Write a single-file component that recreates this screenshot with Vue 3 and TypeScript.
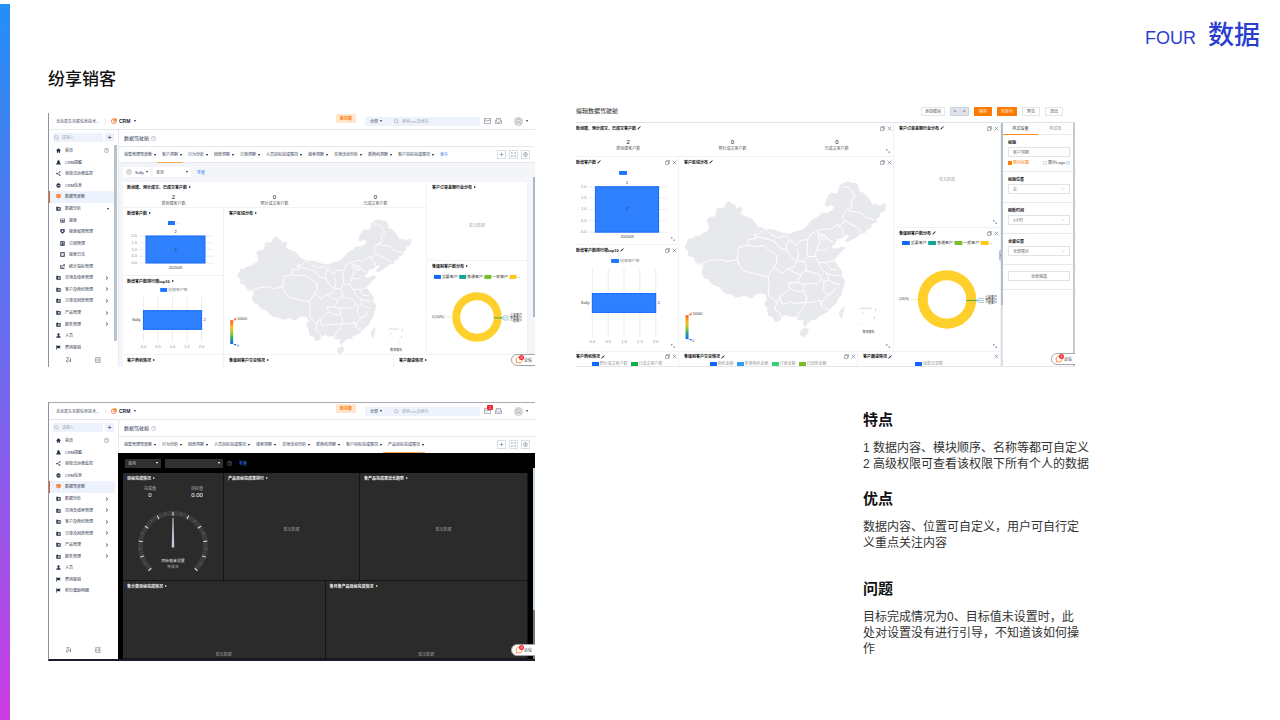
<script setup lang="ts">
interface MenuItem { icon: string; text: string; sub?: boolean; arrow?: 'right' | 'down'; active?: boolean }
interface Shell { id: string; dark: boolean; tabs: string[]; activeTab: string; more: boolean; menu: MenuItem[] }

const icons: Record<string, string> = {
  home: 'M8 1 1 7.500V9h2v6h4v-4h2v4h4V9h2V7.500z',
  bell: 'M8 1a4 4 0 0 0-4 4v3l-3 4v2h14v-2l-3-4V5a4 4 0 0 0-4-4z',
  flow: 'M1 6h4v4H1zM10 1h4v4h-4zM10 11h4v4h-4zM5 7.400l5-4.400v2L6 8l4 3.500v2L5 8.600z',
  pie: 'M8 1a7 7 0 1 0 7 7H10V6h5A7 7 0 0 0 8 1zM5 6h3v4H5z',
  screen: 'M1 1h14v10h-4l-3 4-3-4H1zM4 5v2l3 2 5-4V3.500L7 7z',
  folder: 'M1 2h5l2 2h7v11H1zM6 7v5h2v-2h3v2h2V8H9V7z',
  table: 'M1 2h14v12H1zM3 4v2h10V4zM3 8v4h4V8zM9 8v1.500h4V8zM9 10.500V12h4v-1.500z',
  shield: 'M1 1h14v8l-7 6-7-6zM5 5v3l3 2.500L11 8V5z',
  book: 'M1 1h14v14H1zM4 4v7h3V4zM9 4v3h4V4zM9 11l4 2v-3z',
  log: 'M1 1h14v14H1zM4 4v8h8V4z',
  gauge: 'M1 3h8v2H3v8h9v-3h2v5H1zM11 1h4v6h-4zM5 7h2v5H5zM8 9h2v3H8z',
  person: 'M8 1a3.500 3.500 0 0 0-2 6.500L5 10l-4 2v3h14v-3l-4-2-1-2.500A3.500 3.500 0 0 0 8 1z',
  flag: 'M1 1h2v1h12l-3 4 3 4H3v5H1z',
}

const lead: MenuItem[] = [
  { icon: 'home', text: '首页' },
  { icon: 'bell', text: 'CRM提醒' },
  { icon: 'flow', text: '审批流运维监控' },
  { icon: 'pie', text: 'CRM信息' },
  { icon: 'screen', text: '数据驾驶舱', active: true },
]
const groups: MenuItem[] = ['市场及线索管理', '客户及商机管理', '订单及回款管理', '产品管理', '服务管理']
  .map((text) => ({ icon: 'folder', text, arrow: 'right' as const }))
const tail: MenuItem[] = [
  { icon: 'person', text: '人员' },
  { icon: 'flag', text: '费用报销' },
]

const shells: Shell[] = [
  {
    id: 'light', dark: false, more: true, activeTab: '客户洞察',
    tabs: ['销售管理驾驶舱', '客户洞察', '行为分析', '回款洞察', '订单洞察', '人员目标完成情况', '线索洞察', '市场活动分析', '新商机洞察', '客户目标完成情况'],
    menu: [
      ...lead,
      { icon: 'folder', text: '数据分析', arrow: 'down' },
      { icon: 'table', text: '报表', sub: true },
      { icon: 'shield', text: '报表权限管理', sub: true },
      { icon: 'book', text: '订阅管理', sub: true },
      { icon: 'log', text: '报表日志', sub: true },
      { icon: 'gauge', text: '统计指标管理', sub: true },
      ...groups, ...tail,
    ],
  },
  {
    id: 'dark', dark: true, more: false, activeTab: '产品目标完成情况',
    tabs: ['销售管理驾驶舱', '行为分析', '回款洞察', '人员目标完成情况', '线索洞察', '市场活动分析', '新商机洞察', '客户目标完成情况', '产品目标完成情况'],
    menu: [...lead, { icon: 'folder', text: '数据分析', arrow: 'right' }, ...groups, ...tail, { icon: 'flag', text: '积分激励明细' }],
  },
]

const stats = [
  { value: '2', label: '新创建客户数' },
  { value: '0', label: '预计成交客户数' },
  { value: '0', label: '已成交客户数' },
]

const columns = {
  small: { box: '123 218 100 57', x: 146, w: 59, top: 236, bottom: 263, axis: 137, from: 139, to: 213, legend: 168, legendY: 221, label: 268.5 },
  large: { box: '576 167 102 78', x: 595, w: 64, top: 187, bottom: 233, axis: 586, from: 588, to: 667, legend: 619, legendY: 171, label: 238.5 },
}
const rows = {
  small: { box: '123 286 100 69', x: 143, step: 14.75, top: 297, bottom: 343, barTop: 311, barH: 19, legend: 160, legendY: 288, label: 348.5 },
  large: { box: '576 255 102 97', x: 592, step: 16, top: 269, bottom: 338, barTop: 294, barH: 19, legend: 611, legendY: 259, label: 344 },
}
const donuts = {
  small: { box: '427 271 101 84', cx: 477.5, cy: 317.5, r: 21, w: 8, legend: 434, gap: 25.5, legendY: 275, left: 444, right: 511 },
  large: { box: '894 238 107 114', cx: 947.5, cy: 300, r: 24.5, w: 10, legend: 902, gap: 26.5, legendY: 241, left: 909, right: 986 },
}
const levels = [
  { name: '重要客户', color: '#1268fb' },
  { name: '普通客户', color: '#0fa598' },
  { name: '一般客户', color: '#78bf25' },
  { name: '--', color: '#fcc812' },
]
const maps = {
  small: { box: '224 218 203 137', place: 'translate(-356 62) scale(.867)', gx: 230, gy: 321 },
  large: { box: '679 167 214 185', place: 'translate(0 0)', gx: 685, gy: 316 },
}
const ticks = ['0.0', '0.5', '1.0', '1.5', '2.0']

const outline = 'M688 239 692 239 695 236 699 236 703 233 708 231 708 225 706 220 710 217 714 217 716 213 716 209 720 208 724 208 726 203 729 201 732 204 735 205 736 209 741 207 742 210 740 214 746 217 752 219 755 223 758 227 765 229 774 230 783 233 790 234 797 231 803 230 808 225 812 220 818 217 822 213 828 213 833 210 834 207 831 205 828 207 825 206 826 201 829 195 832 193 837 194 839 190 840 185 844 183 848 181 853 183 857 183 859 187 860 192 864 193 868 197 871 201 873 205 877 204 880 206 884 204 887 204 886 209 885 212 881 213 880 217 877 219 877 223 872 224 872 228 867 230 866 233 861 234 858 237 853 240 847 243 845 241 850 236 847 235 842 239 837 240 836 244 832 247 833 249 838 249 841 247 846 248 843 251 840 254 837 258 834 260 838 266 842 271 843 275 841 276 845 280 845 285 843 290 842 295 839 299 837 304 832 308 829 312 824 315 819 317 817 320 811 321 808 324 805 328 803 325 804 321 798 321 795 317 790 318 787 316 783 317 781 320 778 323 774 322 773 318 769 317 767 313 767 308 764 306 765 302 767 300 765 295 759 294 755 296 752 299 748 298 744 296 740 298 735 298 731 295 726 295 722 292 719 288 714 286 711 285 708 280 704 279 701 274 702 270 703 265 698 265 694 261 693 258 687 256 688 252 684 248 686 243Z'
const borders = [
  'M765 229 759 234 754 235 756 239 748 240 747 246 738 248 737 260 727 262 720 260 709 261 698 265',
  'M748 246 757 247 764 246 770 252 776 255 777 262 774 268 771 272 768 277 760 276 753 274 745 272 740 268 737 260',
  'M754 236 765 239 775 242 779 248 787 251 792 258 797 262 793 268 788 269 782 274 777 270 774 268',
  'M768 277 769 285 768 295 772 299 777 303 780 297 786 293 790 289 788 284 797 283 801 276 793 272 788 269',
  'M765 229 771 235 778 238 786 236 790 240 786 245 787 251M790 240 796 246 800 241 808 240 811 234 818 231 824 229 831 230 837 225 841 226 845 221 843 216 847 210 853 207 851 201 856 197 851 190 848 187 842 187',
  'M797 262 799 254 797 249M808 240 807 249 808 257 804 262 797 262M818 233 820 242 817 250 815 257 808 257M818 233 824 236 829 240 834 243M821 236 825 235 827 239 823 241ZM817 250 824 251 828 248M815 257 819 263 826 263 835 261',
  'M845 221 852 225 857 227 862 232M837 225 843 230 844 236M847 210 854 212 861 213 867 218 875 220M801 276 805 271 812 273 819 275 822 280 817 285 810 284 804 285 797 283',
  'M819 263 822 270 827 274 829 281 824 282 822 280M827 274 834 276 840 276M826 263 831 270 837 270M804 262 807 268 805 271M829 281 835 284 840 285M824 282 824 291 828 296 823 302 821 307M828 296 833 293 836 288',
  'M804 285 804 293 807 298 806 303 813 303 819 301 823 302M790 289 796 292 803 292M780 297 782 305 790 303 797 304 806 303 802 310 798 315 797 320M777 303 775 310 780 314 782 319M819 301 823 308 830 311',
]
const hainan = 'M801 331 805 329 809 330 808 334 805 338 801 337 800 334Z'
const taiwan = 'M843 308 845 307 844 313 842 320 840 317 839 313Z'
const islets = ['M860 309h12M862 314h2M876 309v3M875 317v3M872 325h1M861 325h1']

const gaugeTicks = Array.from({ length: 11 }, (_, i) => -135 + i * 27)
const darkTop = [
  { title: '产品目标完成率排行' },
  { title: '各产品完成率增长趋势' },
]
const selects = [
  { id: 'title-pos', label: '标题位置', value: '左' },
  { id: 'refresh', label: '刷新时间', value: '2小时' },
  { id: 'full', label: '全屏设置', value: '全部展示' },
]
const editorFoot = [
  { title: '客户商机情况', copy: true, legend: [['#1268fb', '预计成交客户数'], ['#0fb04c', '已成交客户数']] },
  { title: '各级别客户交易情况', copy: true, legend: [['#1268fb', '商机金额'], ['#2f9df5', '重单商机金额'], ['#36cf7c', '订单金额'], ['#78bf25', '已回款金额']] },
  { title: '客户跟进情况', copy: false, legend: [['#1268fb', '销售记录数']] },
]
</script>

<template>
  <div class="slide">
    <svg class="defs" aria-hidden="true">
      <defs>
        <linearGradient id="heat" x1="0" y1="0" x2="0" y2="1">
          <stop offset="0" stop-color="#ff5a14" /><stop offset=".3" stop-color="#ffb81c" /><stop offset=".55" stop-color="#9cc63a" />
          <stop offset=".75" stop-color="#22a878" /><stop offset="1" stop-color="#1268fb" />
        </linearGradient>
        <symbol id="i-search" viewBox="0 0 16 16"><circle cx="7" cy="7" r="5.5" fill="none" stroke="currentColor" stroke-width="1.6" /><path d="m11 11 4 4" stroke="currentColor" stroke-width="1.6" /></symbol>
        <symbol id="i-help" viewBox="0 0 16 16"><circle cx="8" cy="8" r="7" fill="none" stroke="currentColor" stroke-width="1.4" /><path d="M5.500 6.500c0-3.500 5-3.500 5-.5 0 2-2.500 2-2.500 3.500M8 11v1.500" fill="none" stroke="currentColor" stroke-width="1.4" /></symbol>
        <symbol id="i-copy" viewBox="0 0 16 16"><path d="M5 4V1.500h9.500v9.500H12M1.500 5H11v9.500H1.500z" fill="none" stroke="currentColor" stroke-width="1.800" /></symbol>
        <symbol id="i-close" viewBox="0 0 16 16"><path d="m2 2 12 12M14 2 2 14" stroke="currentColor" stroke-width="2" /></symbol>
        <symbol id="i-size" viewBox="0 0 16 16"><path d="M1 7V2h5M1 2l4 4M15 9v5h-5M15 14l-4-4" fill="none" stroke="currentColor" stroke-width="2" /></symbol>
        <symbol id="i-pen" viewBox="0 0 16 16"><path d="M1 15 3 10 13 1l2 2-9 9z" fill="currentColor" /></symbol>
        <symbol id="i-down" viewBox="0 0 16 16"><path d="m2 5 6 6 6-6" fill="none" stroke="currentColor" stroke-width="1.600" /></symbol>
      </defs>
    </svg>

    <div class="stripe"></div>
    <header class="head"><span class="four">FOUR</span><span class="topic">数据</span></header>
    <h1 class="brand">纷享销客</h1>

    <main class="board">
      <section v-for="s in shells" :key="s.id" class="shell" :class="{ dark: s.dark }">
        <div class="topbar">
          <span class="org">北京易车互联信息技术...</span>
          <svg class="logo" viewBox="0 0 16 16"><path d="M7 2a6.500 6.500 0 1 0 7 7H7z" fill="#fff" stroke="#f0642d" stroke-width="2" /><path d="M9 0v7h7a7 7 0 0 0-7-7z" fill="#ff7a00" /></svg>
          <b class="crm">CRM</b><i class="caret"></i>
          <span class="fresh">新功能</span>
          <div class="find">
            <span class="scope">全部 <i class="caret"></i></span>
            <svg class="ic5"><use href="#i-search" /></svg>
            <input type="search" placeholder="搜索crm及更多" aria-label="搜索crm及更多">
          </div>
          <span class="mails">
            <svg class="mail" viewBox="0 0 16 14"><path d="M1 1h14v12H1zM1 5h4l1 2h4l1-2h4" fill="none" stroke="#7b8394" stroke-width="1.500" /></svg>
            <em v-if="s.dark" class="count">1</em>
          </span>
          <svg class="mail" viewBox="0 0 16 14"><path d="M3 7V1h10v6M1 6v7h14V6l-5 4H6zM6 4h4" fill="none" stroke="#7b8394" stroke-width="1.500" /></svg>
          <svg class="face" viewBox="0 0 16 16"><circle cx="8" cy="8" r="7.500" fill="#dcdcdc" stroke="#c4c4c4" /><circle cx="8" cy="6.500" r="3" fill="#eee" stroke="#999" /><path d="M3.500 13c1-4 8-4 9 0" fill="#eee" stroke="#999" /></svg>
          <i class="caret"></i>
        </div>

        <aside class="side">
          <div class="seek">
            <label class="box"><svg class="ic5"><use href="#i-search" /></svg><input type="text" placeholder="请输入" aria-label="请输入"></label>
            <button type="button" aria-label="添加">+</button>
          </div>
          <nav class="menu">
            <a v-for="m in s.menu" :key="m.text" href="#" class="item" :class="{ sub: m.sub, active: m.active }">
              <svg viewBox="0 0 16 16" fill-rule="evenodd"><path :d="icons[m.icon]" /></svg>
              <span>{{ m.text }}</span>
              <svg v-if="m.icon === 'home'" class="q"><use href="#i-help" /></svg>
              <svg v-if="m.arrow === 'right'" class="chev" viewBox="0 0 16 16"><path d="m4 2 7 6-7 6" /></svg>
              <i v-if="m.arrow === 'down'" class="caret"></i>
            </a>
          </nav>
          <div class="sidefoot">
            <svg viewBox="0 0 16 16"><path d="M1 2h8M3 4l9 9M12 4v9M2 8v5h4" fill="none" stroke="#4a5568" stroke-width="1.800" /></svg>
            <svg viewBox="0 0 16 16"><path d="M1 2h14M8 6h7M8 10h7M1 14h14M1 5l4 3-4 3z" fill="none" stroke="#4a5568" stroke-width="1.500" /></svg>
          </div>
          <i v-if="!s.dark" class="bar"></i>
        </aside>

        <div class="work">
          <div class="title">数据驾驶舱<svg class="ic5"><use href="#i-help" /></svg></div>
          <div class="tabs">
            <a v-for="t in s.tabs" :key="t" href="#" class="tab" :class="{ on: t === s.activeTab }">{{ t }}<i class="caret"></i></a>
            <a v-if="s.more" href="#" class="tab more">更多</a>
            <span class="tools">
              <button type="button" aria-label="添加"><svg viewBox="0 0 16 16"><path d="M8 2v12M2 8h12" /></svg></button>
              <button type="button" aria-label="全屏"><svg viewBox="0 0 16 16"><path d="M1 5V1h4M11 1h4v4M15 11v4h-4M5 15H1v-4M4 4l2 2M12 4l-2 2M4 12l2-2M12 12l-2-2" /></svg></button>
              <button type="button" aria-label="设置"><svg viewBox="0 0 16 16"><path d="M5 2h6l4 6-4 6H5L1 8z" /><circle cx="8" cy="8" r="2" /></svg></button>
            </span>
          </div>

          <div v-if="!s.dark" class="canvas">
            <div class="filters">
              <button type="button" class="user"><svg class="face" viewBox="0 0 16 16"><circle cx="8" cy="8" r="7" fill="#e6e6e6" stroke="#aaa" /><circle cx="8" cy="6" r="2.500" fill="#fff" stroke="#999" /></svg>Sally<i class="caret"></i></button>
              <label class="pick"><select aria-label="时间"><option>本月</option></select><i class="caret"></i></label>
              <a href="#" class="reset">重置</a>
            </div>
            <div class="panels">
              <div class="leftpart">
                <article class="panel">
                  <h3>新创建、预计成交、已成交客户数<i class="tri"></i></h3>
                  <div class="stats"><p v-for="k in stats" :key="k.label"><b>{{ k.value }}</b>{{ k.label }}</p></div>
                </article>
                <div class="inner">
                  <div class="pair">
                    <article v-for="c in [columns.small]" :key="c.box" class="panel">
                      <h3>新增客户数<i class="tri"></i></h3>
                      <svg class="chart" :viewBox="c.box">
                        <rect :x="c.legend" :y="c.legendY" width="7" height="4" class="blue" /><text :x="c.legend + 9" :y="c.legendY + 3" class="mute">--</text>
                        <g v-for="(t, i) in ticks" :key="t"><path :d="`M${c.from} ${c.bottom - i * (c.bottom - c.top) / 4}H${c.to}`" class="grid" /><text :x="c.axis" :y="c.bottom + 1 - i * (c.bottom - c.top) / 4" class="mute end">{{ t }}</text></g>
                        <rect :x="c.x" :y="c.top" :width="c.w" :height="c.bottom - c.top" class="fillbar" />
                        <text :x="c.x + c.w / 2" :y="c.top - 3" class="mid">2</text><text :x="c.x + c.w / 2" :y="(c.top + c.bottom) / 2 + 1" class="mid">2</text>
                        <text :x="c.x + c.w / 2" :y="c.label" class="mid">202009</text>
                      </svg>
                    </article>
                    <article v-for="c in [rows.small]" :key="c.box" class="panel">
                      <h3>新增客户数排行榜top10<i class="tri"></i></h3>
                      <svg class="chart" :viewBox="c.box">
                        <rect :x="c.legend" :y="c.legendY" width="7" height="4" class="blue" /><text :x="c.legend + 8" :y="c.legendY + 3" class="mute">创建客户数</text>
                        <g v-for="(t, i) in ticks" :key="t"><path :d="`M${c.x + i * c.step} ${c.top}V${c.bottom}`" class="grid" /><text :x="c.x + i * c.step" :y="c.label" class="mute mid">{{ t }}</text></g>
                        <rect :x="c.x" :y="c.barTop" :width="c.step * 4" :height="c.barH" class="fillbar" />
                        <text :x="c.x - 3" :y="c.barTop + 11" class="end">Sally</text><text :x="c.x + c.step * 4 + 2" :y="c.barTop + 11">2</text>
                      </svg>
                    </article>
                  </div>
                  <article v-for="m in [maps.small]" :key="m.box" class="panel">
                    <h3>客户区域分布<i class="tri"></i></h3>
                    <svg class="chart" :viewBox="m.box">
                      <g :transform="m.place" class="land"><path :d="outline" /><path :d="hainan" /><path :d="taiwan" /><path v-for="b in borders" :key="b" :d="b" class="line" /><path v-for="b in islets" :key="b" :d="b" class="isle" /></g>
                      <rect :x="m.gx" :y="m.gy" width="3" height="24" fill="url(#heat)" /><path :d="`M${m.gx + 3} ${m.gy}l3-3v3z`" fill="#ff6a2a" /><path :d="`M${m.gx + 3} ${m.gy + 24}l3 2v-2z`" fill="#1268fb" />
                      <text :x="m.gx + 7" :y="m.gy" class="tiny">100000</text><text :x="m.gx + 7" :y="m.gy + 27" class="tiny">0</text><text x="391" y="352" class="tiny">南海诸岛</text>
                    </svg>
                  </article>
                </div>
              </div>
              <div class="rightpart">
                <article class="panel"><h3>客户订单金额行业分布<i class="tri"></i></h3><p class="none">暂无数据</p></article>
                <article v-for="d in [donuts.small]" :key="d.box" class="panel">
                  <h3>各级别客户数分布<i class="tri"></i></h3>
                  <svg class="chart" :viewBox="d.box">
                    <g v-for="(l, i) in levels" :key="l.name"><rect :x="d.legend + i * d.gap" :y="d.legendY" width="7" height="4" :fill="l.color" /><text :x="d.legend + 8 + i * d.gap" :y="d.legendY + 3">{{ l.name }}</text></g>
                    <circle :cx="d.cx" :cy="d.cy" :r="d.r" fill="none" stroke="#ffd02b" :stroke-width="d.w" />
                    <path :d="`M${d.cx + d.r - 4} ${d.cy + 1}h8`" stroke="#4aa34a" /><path :d="`M${d.left + 1} ${d.cy}H${d.cx - d.r - 4}`" stroke="#ffd75e" stroke-width=".5" />
                    <path :d="`M${d.right - 9} ${d.cy + 1}l3-2h5M${d.right - 9} ${d.cy + 1}h8M${d.right - 9} ${d.cy + 1}l3 2h5`" fill="none" stroke="#3f9fc8" stroke-width=".5" />
                    <text :x="d.left" :y="d.cy + 1" class="tiny end">0 (100%)</text>
                    <text v-for="(l, i) in levels.slice(0, 3)" :key="l.name" :x="d.right" :y="d.cy - 1 + i * 3" class="tiny">{{ l.name }}</text>
                  </svg>
                </article>
              </div>
              <div class="bottom">
                <article v-for="t in ['客户商机情况', '各级别客户交易情况', '客户跟进情况']" :key="t" class="panel"><h3>{{ t }}<i class="tri"></i></h3></article>
              </div>
            </div>
          </div>

          <div v-else class="canvas">
            <div class="filters">
              <label class="pick"><select aria-label="时间"><option>本月</option></select><i class="caret"></i></label>
              <label class="pick wide"><select aria-label="范围"><option></option></select><i class="caret"></i></label>
              <svg class="ic5"><use href="#i-help" /></svg>
              <a href="#" class="reset">重置</a>
            </div>
            <div class="night">
              <article class="panel">
                <h3>目标完成情况<i class="tri"></i></h3>
                <div class="goal"><p>完成值<b>0</b></p><p>目标值<b>0.00</b></p></div>
                <svg class="chart" viewBox="123 499 100 81">
                  <path d="M150 569A33 33 0 1 1 196 569" fill="none" stroke="#3d3d3d" stroke-width="5" />
                  <g v-for="a in gaugeTicks" :key="a" :transform="`rotate(${a} 173 546)`"><path d="M173 511v4" stroke="#f4f4f4" stroke-width="1" /></g>
                  <g v-for="a in gaugeTicks.slice(0, 10)" :key="a" :transform="`rotate(${a + 13.500} 173 546)`"><path d="M173 511v2" stroke="#888" stroke-width=".5" /></g>
                  <path d="M172.500 517h1l.8 30h-2.600z" fill="#c5c5d6" />
                  <text x="173" y="561.5" class="mid bright">目标值未设置</text><text x="173" y="568" class="mid dim">完成率</text>
                </svg>
              </article>
              <article v-for="p in darkTop" :key="p.title" class="panel"><h3>{{ p.title }}<i class="tri"></i></h3><p class="none">暂无数据</p></article>
            </div>
            <div class="night low">
              <article v-for="t in ['各分类目标完成情况', '各月各产品目标完成情况']" :key="t" class="panel"><h3>{{ t }}<i class="tri"></i></h3><p class="none">暂无数据</p></article>
            </div>
          </div>
          <i class="scroll"></i>
        </div>
        <button type="button" class="chat"><svg viewBox="0 0 16 16"><path d="M8 2a6 6 0 1 1-3 11l-3 1 1-3A6 6 0 0 1 8 2z" fill="none" stroke="#ff8a3c" stroke-width="2" /></svg><em>9</em>企信</button>
      </section>

      <section class="editor">
        <div class="edhead">
          <h2>编辑数据驾驶舱</h2>
          <button type="button">添加模块</button>
          <span class="steps"><button type="button" aria-label="撤销"><svg viewBox="0 0 16 16"><path d="M7 2v4c6 0 8 4 8 8-2-3-4-4-8-4v3L1 8z" /></svg></button><button type="button" aria-label="重做"><svg viewBox="0 0 16 16"><path d="M9 2v4c-6 0-8 4-8 8 2-3 4-4 8-4v3l6-5z" /></svg></button></span>
          <button type="button" class="hot">保存</button><button type="button" class="hot">另存为</button><button type="button">预览</button><button type="button">退出</button>
        </div>
        <div class="edbody">
          <div class="edpanels">
            <div class="leftpart">
              <article class="panel">
                <h3>新创建、预计成交、已成交客户数<svg class="pen"><use href="#i-pen" /></svg><span class="ops"><svg><use href="#i-copy" /></svg><svg><use href="#i-close" /></svg></span></h3>
                <div class="stats"><p v-for="k in stats" :key="k.label"><b>{{ k.value }}</b>{{ k.label }}</p></div>
                <svg class="grip"><use href="#i-size" /></svg>
              </article>
              <div class="inner">
                <div class="pair">
                  <article v-for="c in [columns.large]" :key="c.box" class="panel">
                    <h3>新增客户数<svg class="pen"><use href="#i-pen" /></svg><span class="ops"><svg><use href="#i-copy" /></svg><svg><use href="#i-close" /></svg></span></h3>
                    <svg class="chart" :viewBox="c.box">
                      <rect :x="c.legend" :y="c.legendY" width="8" height="4" class="blue" /><text :x="c.legend + 9" :y="c.legendY + 3" class="mute">--</text>
                      <g v-for="(t, i) in ticks" :key="t"><path :d="`M${c.from} ${c.bottom - i * (c.bottom - c.top) / 4}H${c.to}`" class="grid" /><text :x="c.axis" :y="c.bottom + 1 - i * (c.bottom - c.top) / 4" class="mute end">{{ t }}</text></g>
                      <rect :x="c.x" :y="c.top" :width="c.w" :height="c.bottom - c.top" class="fillbar" />
                      <text :x="c.x + c.w / 2" :y="c.top - 3" class="mid">2</text><text :x="c.x + c.w / 2" :y="(c.top + c.bottom) / 2 + 1" class="mid">2</text>
                      <text :x="c.x + c.w / 2" :y="c.label" class="mid">202009</text>
                    </svg>
                    <svg class="grip"><use href="#i-size" /></svg>
                  </article>
                  <article v-for="c in [rows.large]" :key="c.box" class="panel">
                    <h3>新增客户数排行榜top10<svg class="pen"><use href="#i-pen" /></svg><span class="ops"><svg><use href="#i-copy" /></svg><svg><use href="#i-close" /></svg></span></h3>
                    <svg class="chart" :viewBox="c.box">
                      <rect :x="c.legend" :y="c.legendY" width="8" height="4" class="blue" /><text :x="c.legend + 9" :y="c.legendY + 3" class="mute">创建客户数</text>
                      <g v-for="(t, i) in ticks" :key="t"><path :d="`M${c.x + i * c.step} ${c.top}V${c.bottom}`" class="grid" /><text :x="c.x + i * c.step" :y="c.label" class="mute mid">{{ t }}</text></g>
                      <rect :x="c.x" :y="c.barTop" :width="c.step * 4" :height="c.barH" class="fillbar" />
                      <text :x="c.x - 3" :y="c.barTop + 11" class="end">Sally</text><text :x="c.x + c.step * 4 + 2" :y="c.barTop + 11">2</text>
                    </svg>
                    <svg class="grip"><use href="#i-size" /></svg>
                  </article>
                </div>
                <article v-for="m in [maps.large]" :key="m.box" class="panel">
                  <h3>客户区域分布<svg class="pen"><use href="#i-pen" /></svg><span class="ops"><svg><use href="#i-copy" /></svg><svg><use href="#i-close" /></svg></span></h3>
                  <svg class="chart" :viewBox="m.box">
                    <g :transform="m.place" class="land"><path :d="outline" /><path :d="hainan" /><path :d="taiwan" /><path v-for="b in borders" :key="b" :d="b" class="line" /><path v-for="b in islets" :key="b" :d="b" class="isle" /></g>
                    <rect :x="m.gx" :y="m.gy" width="3" height="24" fill="url(#heat)" /><path :d="`M${m.gx + 3} ${m.gy}l3-3v3z`" fill="#ff6a2a" /><path :d="`M${m.gx + 3} ${m.gy + 24}l3 2v-2z`" fill="#1268fb" />
                    <text :x="m.gx + 7" :y="m.gy" class="tiny">100000</text><text :x="m.gx + 7" :y="m.gy + 27" class="tiny">0</text><text x="863" y="334" class="tiny">南海诸岛</text>
                  </svg>
                  <svg class="grip"><use href="#i-size" /></svg>
                </article>
              </div>
            </div>
            <div class="rightpart">
              <article class="panel"><h3>客户订单金额行业分布<svg class="pen"><use href="#i-pen" /></svg><span class="ops"><svg><use href="#i-copy" /></svg><svg><use href="#i-close" /></svg></span></h3><p class="none">暂无数据</p><svg class="grip"><use href="#i-size" /></svg></article>
              <article v-for="d in [donuts.large]" :key="d.box" class="panel">
                <h3>各级别客户数分布<svg class="pen"><use href="#i-pen" /></svg><span class="ops"><svg><use href="#i-copy" /></svg><svg><use href="#i-close" /></svg></span></h3>
                <svg class="chart" :viewBox="d.box">
                  <g v-for="(l, i) in levels" :key="l.name"><rect :x="d.legend + i * d.gap" :y="d.legendY" width="8" height="4" :fill="l.color" /><text :x="d.legend + 9 + i * d.gap" :y="d.legendY + 3">{{ l.name }}</text></g>
                  <circle :cx="d.cx" :cy="d.cy" :r="d.r" fill="none" stroke="#ffd02b" :stroke-width="d.w" />
                  <path :d="`M${d.cx + d.r - 5} ${d.cy + 1}h10`" stroke="#4aa34a" /><path :d="`M${d.left + 1} ${d.cy}H${d.cx - d.r - 5}`" stroke="#ffd75e" stroke-width=".5" />
                  <path :d="`M${d.right - 9} ${d.cy + 1}l3-2h5M${d.right - 9} ${d.cy + 1}h8M${d.right - 9} ${d.cy + 1}l3 2h5`" fill="none" stroke="#3f9fc8" stroke-width=".5" />
                  <text :x="d.left" :y="d.cy + 1" class="tiny end">(100%)</text>
                  <text v-for="(l, i) in levels.slice(0, 3)" :key="l.name" :x="d.right" :y="d.cy - 1 + i * 3" class="tiny">{{ l.name }}</text>
                </svg>
                <svg class="grip"><use href="#i-size" /></svg>
              </article>
            </div>
            <div class="bottom">
              <article v-for="f in editorFoot" :key="f.title" class="panel">
                <h3>{{ f.title }}<svg class="pen"><use href="#i-pen" /></svg><span class="ops"><svg v-if="f.copy"><use href="#i-copy" /></svg><svg><use href="#i-close" /></svg></span></h3>
                <div class="keys"><span v-for="l in f.legend" :key="l[1]"><i :style="{ background: l[0] }"></i>{{ l[1] }}</span></div>
              </article>
            </div>
          </div>
          <div class="rail"><button type="button" aria-label="收起">›</button></div>
          <form class="config">
            <div class="cftabs"><a href="#" class="on">样式设置</a><a href="#">样式库</a></div>
            <div class="field first">
              <label for="cf-title">标题</label>
              <input id="cf-title" type="text" value="客户洞察">
              <div class="checks">
                <label class="sel"><input type="checkbox" checked>展示标题</label>
                <label><input type="checkbox">展示Logo<svg><use href="#i-help" /></svg></label>
              </div>
            </div>
            <div v-for="f in selects" :key="f.id" class="field">
              <label :for="f.id">{{ f.label }}</label>
              <div class="drop"><select :id="f.id"><option>{{ f.value }}</option></select><svg><use href="#i-down" /></svg></div>
            </div>
            <div class="field last"><button type="button">全局筛选</button></div>
          </form>
        </div>
        <button type="button" class="chat"><svg viewBox="0 0 16 16"><path d="M8 2a6 6 0 1 1-3 11l-3 1 1-3A6 6 0 0 1 8 2z" fill="none" stroke="#ff8a3c" stroke-width="2" /></svg><em>9</em>企信</button>
      </section>

      <section class="notes">
        <h2>特点</h2>
        <p class="keep">1 数据内容、模块顺序、名称等都可自定义<br>2 高级权限可查看该权限下所有个人的数据</p>
        <h2>优点</h2>
        <p>数据内容、位置可自定义，用户可自行定义重点关注内容</p>
        <h2 class="wide">问题</h2>
        <p>目标完成情况为0、目标值未设置时，此处对设置没有进行引导，不知道该如何操作</p>
      </section>
    </main>
  </div>
</template>

<style>
body { margin: 0; background: #fff; }
</style>

<style scoped>
.slide, .slide * { box-sizing: border-box; }
.slide { position: relative; min-height: 100vh; padding-left: 48px; font-family: "Liberation Sans", "Noto Sans CJK SC", sans-serif; color: #222; overflow: hidden; }
.slide button, .slide input, .slide select { font: inherit; color: inherit; padding: 0; margin: 0; border: 0; background: none; min-width: 0; }
.slide h1, .slide h2, .slide h3, .slide p { margin: 0; }
.slide a { color: inherit; text-decoration: none; }
.slide svg { display: block; flex: none; }
.slide em { font-style: normal; }
.defs { position: absolute; width: 0; height: 0; }
.stripe { position: absolute; left: 0; top: 4px; bottom: 0; width: 10px; background: linear-gradient(#2490f6, #7666ee 55%, #cc3ce2); }
.head { display: flex; justify-content: flex-end; align-items: baseline; gap: 12px; height: 68px; padding: 16px 20px 0 0; color: #2a3fd0; line-height: 38px; }
.four { font-size: 18px; }
.topic { font-size: 26px; font-weight: 500; }
.brand { height: 32px; font-size: 17px; line-height: 24px; font-weight: 500; color: #111; }

.board { display: grid; grid-template-columns: minmax(0, 487fr) minmax(0, 499fr) minmax(0, 164fr); column-gap: 41px; row-gap: 35px; align-items: start; font-size: 4px; line-height: 5px; white-space: nowrap; }
.shell { position: relative; grid-column: 1; grid-row: 1; align-self: end; height: 254px; display: grid; grid-template-columns: 70px minmax(0, 1fr); grid-template-rows: 17px minmax(0, 1fr); border-left: 1px solid #8a93a5; overflow: hidden; color: #2c3650; background: #fff; }
.shell.dark { grid-row: 2; height: 259px; border-top: 1px solid #a9a9ae; border-bottom: 2px solid #1b1b2a; }
.editor { position: relative; grid-column: 2; grid-row: 1; height: 267px; overflow: hidden; border-bottom: 1px solid #e4e6ea; }
.notes { grid-column: 2 / 4; grid-row: 2; margin-left: 287px; padding-top: 8px; font-size: 12px; line-height: 16px; color: #333; width: 220px; white-space: normal; }
.slide .notes h2 { font-size: 15px; line-height: 20px; font-weight: 700; color: #111; margin: 17px 0 10px; }
.slide .notes h2:first-child { margin-top: 0; }
.slide .notes h2.wide { margin-top: 28px; }
.notes .keep { white-space: nowrap; }

.caret { width: 0; height: 0; border: 1px solid transparent; border-top: 2px solid #333; border-bottom: 0; flex: none; }
.tri { width: 0; height: 0; border: 1px solid transparent; border-left: 2px solid currentColor; border-right: 0; }
.ic5 { width: 5px; height: 5px; color: #8d95a5; }

.topbar { grid-column: 1 / 3; display: flex; align-items: center; padding: 0 7px; border-bottom: 1px solid #e4e7ed; color: #3c4660; }
.org { width: 50px; border-right: 1px solid #e8eaee; }
.logo { width: 6px; height: 6px; margin-left: 5px; }
.crm { font-size: 5px; margin: 0 4px 0 2px; color: #16203c; }
.fresh { margin: 0 9px 6px auto; padding: 2px 4px; background: #ffe6cd; color: #ff7a00; font-weight: 700; border-radius: 1px; }
.find { display: flex; align-items: center; gap: 3px; width: 115px; height: 9px; padding-left: 5px; margin-right: 4px; background: #eef2fc; }
.scope { display: flex; align-items: center; gap: 2px; width: 21px; }
.find input { flex: 1; outline: 0; }
.slide ::placeholder { color: #a2a9b8; opacity: 1; }
.mails { position: relative; }
.mail { width: 7px; height: 6px; margin-right: 4px; }
.count { position: absolute; left: 3px; top: -3px; width: 6px; height: 5px; background: #f5222d; color: #fff; border-radius: 1px; text-align: center; }
.face { width: 9px; height: 9px; margin: 0 3px 0 8px; }

.side { position: relative; display: flex; flex-direction: column; border-right: 1px solid #e8eaf0; min-height: 0; }
.seek { display: flex; gap: 2px; padding: 3px 4px 3px; height: 15px; }
.seek .box { display: flex; align-items: center; gap: 3px; padding-left: 1px; flex: 1; background: #eef2fc; height: 9px; }
.seek .box input { width: 30px; outline: 0; }
.slide .seek button { width: 9px; height: 9px; background: #eef2fc; font-size: 8px; line-height: 8px; }
.menu { display: grid; grid-template-rows: repeat(18, minmax(0, 1fr)); height: 208px; padding-right: 3px; }
.item { display: flex; align-items: center; gap: 4px; padding: 0 6px 0 6px; border-left: 1px solid transparent; }
.item svg { width: 5px; height: 5px; fill: #25304f; }
.item span { margin-right: auto; }
.item .q { color: #606b80; fill: none; }
.item .chev { width: 4px; height: 4px; fill: none; stroke: #333; stroke-width: 3; }
.item.sub { padding-left: 10px; }
.item.active { background: #edf2fd; border-left-color: #e0621a; }
.item.active svg { fill: #ff6f0f; }
.sidefoot { display: flex; justify-content: space-around; padding: 4px 5px 0; }
.sidefoot svg { width: 6px; height: 6px; }
.bar { position: absolute; right: 1px; top: 15px; width: 3px; height: 196px; background: #b7c2cc; }

.work { position: relative; display: flex; flex-direction: column; min-width: 0; min-height: 0; }
.title { display: flex; align-items: center; gap: 2px; height: 17px; padding-left: 5px; border-bottom: 1px solid #e4e7ed; font-size: 5px; }
.tabs { display: flex; height: 16px; border-bottom: 1px solid #e6e9ef; padding-right: 5px; }
.tab { display: flex; align-items: center; gap: 2px; padding: 0 1px 0 5px; }
.tab .caret { border-top-color: #111; }
.tab.on { box-shadow: 0 1px #ffab52; }
.slide .tab.more, .slide .reset { color: #3b82f6; }
.tools { display: flex; gap: 3px; align-items: center; margin-left: auto; }
.slide .tools button { width: 9px; height: 9px; border: 1px solid #dadfe6; display: grid; place-items: center; }
.tools svg { width: 5px; height: 5px; fill: none; stroke: #5b6475; stroke-width: 1.6; }
.canvas { flex: 1; min-height: 0; padding: 4px 7px 0 4px; background: #f3f5f9; }
.filters { display: flex; align-items: center; gap: 3px; height: 10px; margin-bottom: 5px; }
.user { display: flex; align-items: center; gap: 2px; width: 27px; height: 10px; }
.slide .user, .slide .pick { background: #fff; }
.user .face { width: 6px; height: 6px; margin: 0 1px 0 3px; }
.pick { display: flex; align-items: center; width: 38px; height: 10px; padding: 0 3px; }
.pick select { flex: 1; appearance: none; outline: 0; }
.reset { margin-left: 3px; }

.panels { display: grid; grid-template-columns: minmax(0, 304fr) minmax(0, 101fr); grid-template-rows: 173px 13px; }
.panel { position: relative; display: flex; flex-direction: column; min-width: 0; min-height: 0; background: #fff; border: solid #f1f2f5; border-width: 0 1px 1px 0; }
.panel h3 { display: flex; align-items: center; gap: 2px; height: 10px; flex: none; padding-left: 4px; font-size: 4px; font-weight: 700; color: #111; }
.inner > .panel h3, .rightpart .panel h3, .bottom .panel + .panel h3 { padding-left: 5px; }
.leftpart { display: grid; grid-template-rows: 26px minmax(0, 1fr); min-width: 0; }
.inner { display: grid; grid-template-columns: minmax(0, 101fr) minmax(0, 203fr); }
.pair { display: grid; grid-template-rows: 68px 79px; min-width: 0; }
.rightpart { display: grid; grid-template-rows: 79px 94px; min-width: 0; }
.bottom { grid-column: 1 / 3; display: grid; grid-template-columns: minmax(0, 101fr) minmax(0, 170fr) minmax(0, 134fr); overflow: hidden; }
.stats { display: grid; grid-template-columns: repeat(3, 1fr); padding-top: 2px; text-align: center; color: #555; }
.stats b { display: block; font-size: 6px; line-height: 7px; font-weight: 400; color: #111; }
.chart { width: 100%; flex: 1 1 0 !important; min-height: 0; }
.chart text { font-size: 4px; fill: #333; }
.chart .mute { fill: #8b8b8b; }
.chart .tiny { font-size: 3px; }
.chart .end { text-anchor: end; }
.chart .mid { text-anchor: middle; }
.chart .bright { fill: #eee; }
.chart .dim { fill: #aaa; }
.blue { fill: #1f75fe; }
.fillbar { fill: #2f80ff; stroke: #1268fb; stroke-width: 1; }
.grid { stroke: #e6e6e6; stroke-width: 1; opacity: .7; }
.land { fill: #e8e9ed; }
.land .line { fill: none; stroke: #fff; stroke-width: 1; stroke-linejoin: round; }
.land .isle { fill: none; stroke: #d3d5db; stroke-width: 1; }
.none { flex: 1; display: grid; place-items: center; padding-bottom: 2px; color: #b0b0b0; }
.scroll { position: absolute; right: 0; top: 47px; width: 2px; height: 140px; background: #a9b8c8; }

.dark .canvas { background: #000; display: flex; flex-direction: column; padding-top: 5px; }
.dark .tabs { border-bottom-color: #fff; padding-left: 1px; }
.dark .title { padding-left: 6px; }
.dark .work { margin-left: -1px; }
.dark .canvas { padding-left: 5px; }
.dark .filters { padding-left: 2px; margin-bottom: 5px; gap: 4px; color: #ddd; }
.dark .filters .pick { background: #303030; width: 36px; height: 9px; }
.dark .filters .pick.wide { width: 58px; }
.dark .filters .caret { border-top-color: #fff; }
.dark .ic5 { color: #9a9ea8; }
.night { display: grid; grid-template-columns: minmax(0, 101fr) minmax(0, 136fr) minmax(0, 168fr); grid-template-rows: 108px; }
.night.low { grid-template-columns: 1fr 1fr; grid-template-rows: minmax(0, 1fr); flex: 1; min-height: 0; }
.dark .panel { background: #2b2b2b; border-color: #141414; }
.dark .panel h3 { color: #f2f2f2; }
.dark .none { color: #9a9a9a; padding-bottom: 5px; }
.low .none { place-items: end center; padding-bottom: 1px; }
.slide .low .none { padding-bottom: 1px; }
.goal { display: flex; justify-content: space-between; padding: 3px 20px 0 21px; text-align: center; color: #bbb; }
.goal b { display: block; font-size: 6px; line-height: 9px; font-weight: 400; color: #fff; }
.dark .scroll { top: 48px; height: 142px; background: #c9d7ea; box-shadow: 0 50px #77797e; }

.slide .chat { position: absolute; right: -2px; bottom: 1px; width: 26px; height: 12px; display: flex; align-items: center; gap: 1px; padding-left: 3px; border: 1px solid #a5a5a5; border-radius: 6px 0 0 6px; background: #fff; color: #333; }
.slide .dark .chat { bottom: 3px; }
.chat svg { width: 8px; height: 8px; }
.chat em { position: absolute; left: 7px; top: 0; width: 5px; height: 5px; border-radius: 50%; background: #f5222d; color: #fff; line-height: 5px; text-align: center; }

.edhead { display: flex; align-items: center; gap: 5px; height: 23px; padding-right: 12px; border-bottom: 1px solid #dfe3e9; color: #555; }
.edhead h2 { margin-right: auto; font-size: 6px; font-weight: 400; color: #222; }
.slide .edhead > button { height: 9px; border: 1px solid #e2e5ea; padding: 0 3px; min-width: 18px; }
.slide .edhead > .hot { background: #ff7a00; border-color: #ff7a00; color: #fff; }
.steps { display: flex; background: #dfe3ea; border: 1px solid #cfd5de; height: 9px; width: 19px; }
.slide .steps button { flex: 1; height: 7px; display: grid; place-items: center; }
.steps svg { width: 4px; height: 4px; fill: #8a93a3; }
.edbody { display: grid; grid-template-columns: minmax(0, 425fr) 2px minmax(0, 72fr); height: 244px; }
.edpanels { display: grid; grid-template-columns: minmax(0, 318fr) minmax(0, 107fr); grid-template-rows: 229px 15px; min-width: 0; }
.editor .panel h3 { padding-right: 1px; }
.editor .leftpart > .panel h3, .editor .pair .panel h3, .editor .bottom .panel:first-child h3 { padding-left: 0; }
.editor .leftpart { grid-template-rows: 34px minmax(0, 1fr); }
.editor .inner { grid-template-columns: minmax(0, 103fr) minmax(0, 215fr); }
.editor .pair { grid-template-rows: 88px 107px; }
.editor .rightpart { grid-template-rows: 105px 124px; }
.editor .bottom { grid-template-columns: minmax(0, 103fr) minmax(0, 179fr) minmax(0, 143fr); }
.editor .bottom .panel { border-bottom: 0; }
.editor .bottom .panel h3 { height: 9px; }
.editor .stats { padding: 6px 4px 0 0; }
.pen { width: 4px; height: 4px; margin-left: -1px; }
.ops { display: flex; gap: 2px; margin-left: auto; color: #6c7484; }
.ops svg { width: 5px; height: 5px; }
.grip { position: absolute; right: 3px; bottom: 3px; width: 4px; height: 4px; color: #555; }
.keys { display: flex; justify-content: center; gap: 3px; line-height: 5px; color: #999; }
.keys span { display: flex; align-items: center; gap: 1px; }
.keys i { width: 7px; height: 4px; }
.rail { position: relative; background: linear-gradient(#b0becb 0 182px, #dbe1ea 182px); }
.slide .rail button { position: absolute; right: 0; top: 127px; width: 4px; height: 11px; border-radius: 2px 0 0 2px; background: #b9c2ce; color: #555; line-height: 10px; }
.config { border-right: 2px solid #c9cace; color: #444; min-width: 0; }
.cftabs { display: grid; grid-template-columns: 1fr 1fr; height: 12px; line-height: 11px; text-align: center; border-bottom: 1px solid #e9ebef; color: #888; }
.slide .cftabs .on { color: #333; border-bottom: 1px solid #ff8a1f; }
.field { height: 31px; padding: 5px 3px 0 5px; border-bottom: 1px solid #e6e8ec; }
.field > label { display: block; height: 7px; font-weight: 700; color: #222; }
.field.first { height: 37px; }
.slide .field > input, .drop, .slide .field > button { display: flex; width: 100%; height: 10px; border: 1px solid #e0e3e8; align-items: center; color: #666; }
.slide .field > input { padding-left: 4px; }
.drop { padding: 0 4px; }
.drop select { flex: 1; appearance: none; outline: 0; }
.drop svg { width: 4px; height: 4px; color: #aaa; }
.slide .field > button { justify-content: center; color: #555; }
.field.last { height: 25px; padding-top: 6px; }
.checks { display: flex; justify-content: space-between; padding-top: 3px; }
.checks label { display: flex; align-items: center; gap: 1px; }
.checks .sel { color: #ff7a00; }
.slide .checks input { appearance: none; width: 4px; height: 4px; border: 1px solid #dcdfe4; }
.slide .checks .sel input { background: #ff7a00; border-color: #ff7a00; }
.checks svg { width: 4px; height: 4px; color: #6f9fc9; }
</style>
